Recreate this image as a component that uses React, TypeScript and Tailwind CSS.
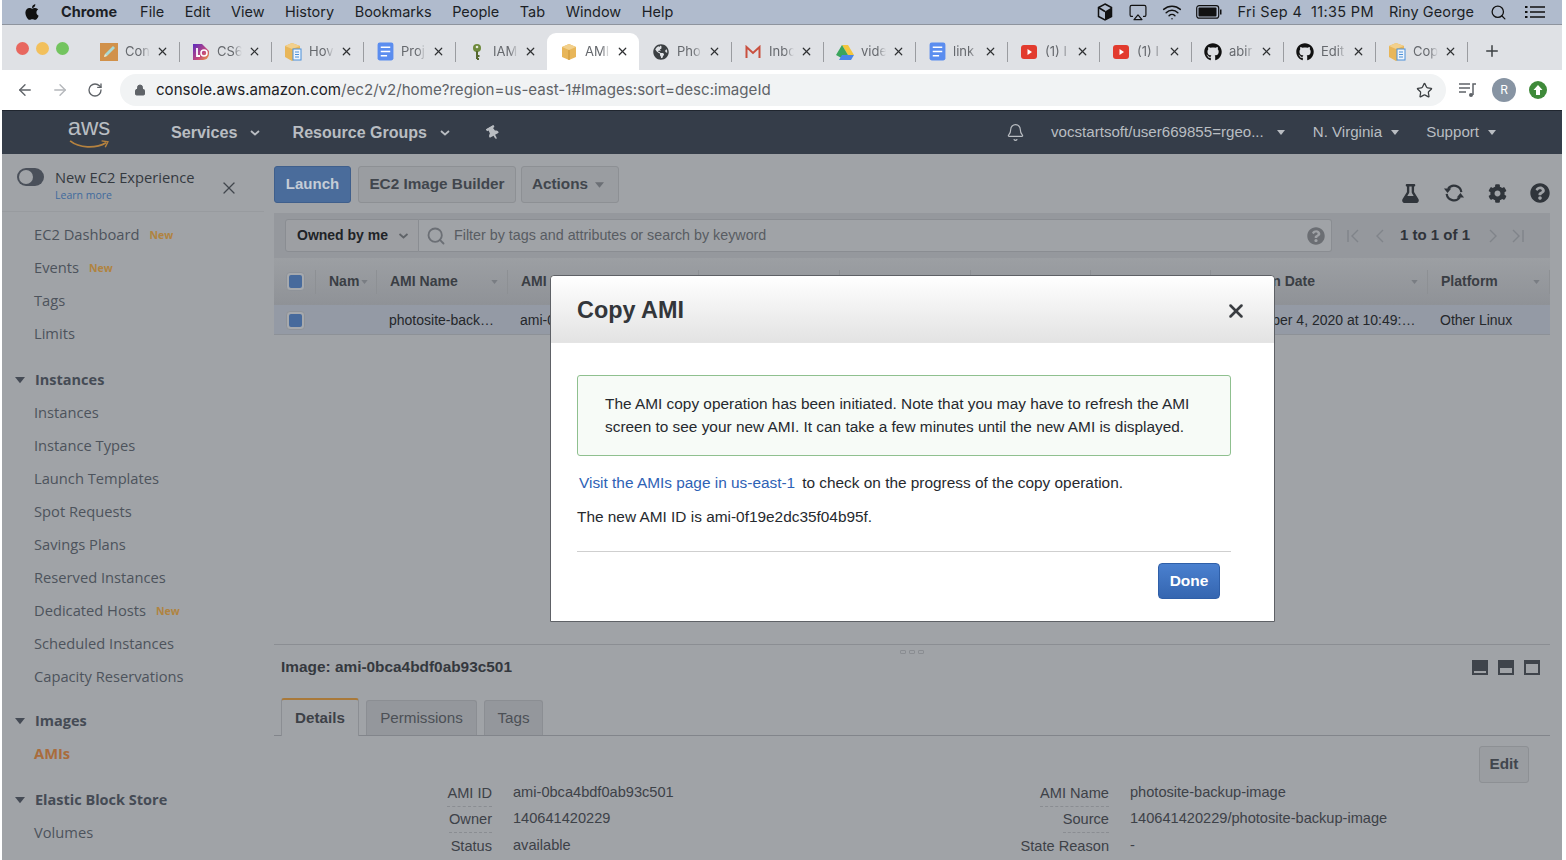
import type { ReactNode } from 'react'
import {
  FaApple,
  FaCog,
  FaFlask,
  FaGithub,
  FaGlobeAmericas,
  FaQuestionCircle,
  FaThumbtack,
} from 'react-icons/fa'
import { Airplay, ArrowLeft, ArrowRight, Bell, Lock, Plus, RotateCw, Search, Star, Wifi, X } from 'lucide-react'

function Box() {
  return (
    <svg viewBox="0 0 16 18" className="h-[18px] w-[16px]">
      <path d="M8 1l7 3v10l-7 3-7-3V4z" fill="#e8b659" />
      <path d="M8 1l7 3-7 3-7-3z" fill="#f2d08c" />
      <path d="M8 7v10" stroke="#c99436" strokeWidth="1" />
    </svg>
  )
}

function BoxDoc() {
  return (
    <svg viewBox="0 0 18 20" className="h-[20px] w-[18px]">
      <path d="M8 1l8 3v11l-8 4-7-4V4z" fill="#e8b659" />
      <path d="M8 1l8 3-8 3-7-3z" fill="#f2d08c" />
      <rect x="9" y="7" width="8" height="11" fill="#eef4fb" stroke="#4a90d9" />
      <path d="M11 10h4M11 12.500h4M11 15h4" stroke="#4a90d9" />
    </svg>
  )
}

function Doc() {
  return (
    <svg viewBox="0 0 16 18" className="h-[19px] w-[17px]">
      <rect x="0.500" y="0.500" width="15" height="17" rx="2" fill="#5b8def" />
      <path d="M3.500 5h9M3.500 9h9M3.500 13h6" stroke="#fff" strokeWidth="1.600" />
    </svg>
  )
}

function Pencil() {
  return (
    <svg viewBox="0 0 18 18" className="h-[18px] w-[18px]">
      <rect width="18" height="18" fill="#d1914a" />
      <path d="M4 14l1-3 8-8 2 2-8 8z" fill="#a9d9d4" />
      <path d="M4 14l1-3 2 2z" fill="#f3e2c0" />
    </svg>
  )
}

function LgLogo() {
  return (
    <svg viewBox="0 0 18 18" className="h-[18px] w-[18px]">
      <defs>
        <linearGradient id="lgGrad" x1="0" y1="0" x2="1" y2="1">
          <stop offset="0" stopColor="#5b2bbf" />
          <stop offset="0.600" stopColor="#c2487e" />
          <stop offset="1" stopColor="#f0a13c" />
        </linearGradient>
      </defs>
      <path d="M1 1h9l7 7v3a6 6 0 0 1-6 6H1z" fill="url(#lgGrad)" />
      <path d="M5 5v8h3" stroke="#fff" strokeWidth="1.800" fill="none" />
      <circle cx="12" cy="10" r="3" stroke="#fff" strokeWidth="1.500" fill="none" />
    </svg>
  )
}

function KeyIcon() {
  return (
    <svg viewBox="0 0 12 18" className="h-[18px] w-[12px]">
      <circle cx="6" cy="5" r="4" fill="#6e8a3c" />
      <circle cx="6" cy="4" r="1.300" fill="#e8eadf" />
      <path d="M6 8v8M6 13h2.500M6 16h2" stroke="#55682f" strokeWidth="2" />
    </svg>
  )
}

function Gmail() {
  return (
    <svg viewBox="0 0 16 14" className="h-[14px] w-[16px]">
      <path d="M1.500 13V2l6.500 6 6.500-6v11" fill="none" stroke="#c9503f" strokeWidth="2" />
    </svg>
  )
}

function Drive() {
  return (
    <svg viewBox="0 0 18 16" className="h-[16px] w-[18px]">
      <path d="M6 1h6l6 10h-6z" fill="#f4c63d" />
      <path d="M6 1l6 10-3 5-9-5z" fill="#3ba55d" />
      <path d="M3 16l3-5h12l-3 5z" fill="#4a86e8" />
    </svg>
  )
}

function YouTube() {
  return (
    <svg viewBox="0 0 16 16" className="h-[16px] w-[16px]">
      <rect width="16" height="14" y="1" rx="3" fill="#e23b2e" />
      <path d="M6.500 5l4.500 3-4.500 3z" fill="#fff" />
    </svg>
  )
}

const tabs: { label: string; icon: ReactNode; active?: boolean }[] = [
  { label: 'Con', icon: <Pencil /> },
  { label: 'CS6', icon: <LgLogo /> },
  { label: 'Hov', icon: <BoxDoc /> },
  { label: 'Proj', icon: <Doc /> },
  { label: 'IAM', icon: <KeyIcon /> },
  { label: 'AMI', icon: <Box />, active: true },
  { label: 'Pho', icon: <FaGlobeAmericas className="text-[16px] text-[#3c4043]" /> },
  { label: 'Inbo', icon: <Gmail /> },
  { label: 'vide', icon: <Drive /> },
  { label: 'link', icon: <Doc /> },
  { label: '(1) I', icon: <YouTube /> },
  { label: '(1) I', icon: <YouTube /> },
  { label: 'abir', icon: <FaGithub className="text-[18px] text-[#111]" /> },
  { label: 'Edit', icon: <FaGithub className="text-[18px] text-[#111]" /> },
  { label: 'Cop', icon: <BoxDoc /> },
]

function MenuBar() {
  const items = ['File', 'Edit', 'View', 'History', 'Bookmarks', 'People', 'Tab', 'Window', 'Help']
  return (
    <div className="flex h-[24px] items-center bg-[#b0bbcd] font-['Inter',sans-serif] text-[14.500px] text-[#1c1f26]">
      <FaApple className="ml-[21px] text-[18px] text-[#111]" />
      <span className="ml-[20px] font-bold">Chrome</span>
      <div className="ml-[23px] flex gap-[20.500px]">
        {items.map((item) => (
          <span key={item}>{item}</span>
        ))}
      </div>
      <div className="ml-auto flex items-center">
        <svg viewBox="0 0 16 18" className="h-[18px] w-[16px]">
          <path d="M8 1l6.500 3.500v9L8 17l-6.500-3.500v-9z" fill="none" stroke="#111" strokeWidth="1.500" />
          <path d="M8 8.500l6.500-4v9L8 17z" fill="#111" />
          <path d="M8 8.500l-6.500-4" stroke="#111" strokeWidth="1.500" />
        </svg>
        <Airplay className="ml-[15px] h-[19px] w-[20px] text-[#111]" strokeWidth={1.500} />
        <Wifi className="ml-[13px] h-[20px] w-[22px] text-[#111]" strokeWidth={1.800} />
        <svg viewBox="0 0 26 14" className="ml-[13px] h-[14px] w-[26px]">
          <rect x="0.700" y="0.700" width="22" height="12.500" rx="2.500" fill="none" stroke="#111" strokeWidth="1.200" />
          <rect x="2.500" y="2.500" width="18" height="9" rx="1" fill="#111" />
          <rect x="24" y="4.500" width="1.500" height="5" fill="#111" />
        </svg>
        <span className="ml-[15px] whitespace-pre tracking-[0.350px]">Fri Sep 4  11:35 PM</span>
        <span className="ml-[15px] tracking-[0.100px]">Riny George</span>
        <Search className="ml-[16px] h-[17px] w-[17px] text-[#111]" strokeWidth={1.800} />
        <svg viewBox="0 0 20 14" className="ml-[18px] mr-[17px] h-[14px] w-[20px]">
          <path d="M5 2h15M5 7h15M5 12h15" stroke="#111" strokeWidth="1.500" />
          <path d="M0 2h2.500M0 7h2.500M0 12h2.500" stroke="#111" strokeWidth="1.800" />
        </svg>
      </div>
    </div>
  )
}

function TabStrip() {
  return (
    <div className="flex h-[46px] items-end border-t border-t-[#8e949e] bg-[#dfe1e5] font-['Inter',sans-serif] text-[13px] text-[#66696e]">
      <div className="mb-[15px] ml-[14px] flex w-[71px] gap-[7px] self-end">
        <span className="h-[13px] w-[13px] rounded-full bg-[#e8675f]" />
        <span className="h-[13px] w-[13px] rounded-full bg-[#f2c05c]" />
        <span className="h-[13px] w-[13px] rounded-full bg-[#73c45f]" />
      </div>
      {tabs.map((tab, i) => (
        <div
          key={i}
          className={
            tab.active
              ? 'flex h-[37px] w-[92px] items-center rounded-t-[9px] bg-white pl-[13px]'
              : 'flex h-[37px] w-[92px] items-center pl-[13px]'
          }
        >
          <span className="flex w-[18px] shrink-0 justify-center">{tab.icon}</span>
          <span className="ml-[7px] w-[25px] shrink-0 overflow-hidden whitespace-nowrap [mask-image:linear-gradient(to_right,black_65%,transparent)]">
            {tab.label}
          </span>
          <X className="ml-[6px] h-[13px] w-[13px] shrink-0 text-[#2f3133]" strokeWidth={2.200} />
          {!tab.active && tabs[i + 1]?.active !== true && (
            <span className="ml-[10px] h-[20px] w-px shrink-0 bg-[#9a9ca0]" />
          )}
        </div>
      ))}
      <Plus className="mb-[10px] ml-[16px] h-[18px] w-[18px] text-[#3c4043]" strokeWidth={2} />
    </div>
  )
}

function AddressBar() {
  return (
    <div className="flex h-[40px] items-center bg-white font-['Inter',sans-serif]">
      <ArrowLeft className="ml-[14px] h-[18px] w-[18px] text-[#5f6368]" strokeWidth={1.800} />
      <ArrowRight className="ml-[17px] h-[18px] w-[18px] text-[#b4b7bb]" strokeWidth={1.800} />
      <RotateCw className="ml-[18px] h-[16px] w-[16px] text-[#5f6368]" strokeWidth={2} />
      <div className="ml-[17px] flex h-[32px] w-[1326px] items-center rounded-full bg-[#f1f3f4] pl-[14px] text-[15.100px]">
        <Lock className="h-[12px] w-[12px] fill-[#5f6368] text-[#5f6368]" />
        <span className="ml-[10px] text-[#202124]">console.aws.amazon.com</span>
        <span className="text-[#5f6368]">/ec2/v2/home?region=us-east-1#Images:sort=desc:imageId</span>
        <Star className="ml-auto mr-[13px] h-[17px] w-[17px] text-[#3c4043]" strokeWidth={1.800} />
      </div>
      <svg viewBox="0 0 18 16" className="ml-[13px] h-[16px] w-[18px]">
        <path d="M0 2h11M0 6h11M0 10h7" stroke="#5f6368" strokeWidth="1.500" />
        <circle cx="12" cy="13" r="2" fill="#5f6368" />
        <path d="M14 13V2h3" stroke="#5f6368" strokeWidth="1.500" fill="none" />
      </svg>
      <span className="ml-[15px] flex h-[24px] w-[24px] items-center justify-center rounded-full bg-[#8794a3] text-[12px] text-white">
        R
      </span>
      <span className="ml-[13px] flex h-[18px] w-[18px] items-center justify-center rounded-full bg-[#3f8a3a]">
        <svg viewBox="0 0 10 10" className="h-[10px] w-[10px]">
          <path d="M5 0l4.500 5H7v5H3V5H.500z" fill="#fff" />
        </svg>
      </span>
    </div>
  )
}

function NavCaret({ className }: { className: string }) {
  return (
    <svg viewBox="0 0 10 6" className={className}>
      <path d="M1 1l4 3.500L9 1" fill="none" stroke="currentColor" strokeWidth="1.800" />
    </svg>
  )
}

function Tri({ className }: { className: string }) {
  return (
    <svg viewBox="0 0 8 5" className={className}>
      <path d="M0 0h8L4 5z" fill="currentColor" />
    </svg>
  )
}

function AwsNav() {
  return (
    <div className="flex h-[44px] items-center border-t border-t-[#20262f] bg-[#353d49] text-[#b9bdc2]">
      <div className="relative ml-[64px] h-[36px] w-[46px]">
        <span className="block text-center text-[24px] leading-[24px]">aws</span>
        <svg viewBox="0 0 44 10" className="absolute bottom-[2px] left-[1px] h-[9px] w-[44px]">
          <path d="M1 1c10 8 28 9 40 2" fill="none" stroke="#b5823f" strokeWidth="2" />
          <path d="M36 1l7 1-3 6" fill="none" stroke="#b5823f" strokeWidth="1.600" />
        </svg>
      </div>
      <span className="ml-[59px] text-[16.200px] font-bold">Services</span>
      <NavCaret className="ml-[12px] h-[6px] w-[10px]" />
      <span className="ml-[33px] text-[16px] font-bold">Resource Groups</span>
      <NavCaret className="ml-[13px] h-[6px] w-[10px]" />
      <FaThumbtack className="ml-[36px] -rotate-30 text-[14px]" />
      <Bell className="ml-auto h-[19px] w-[19px]" strokeWidth={1.500} />
      <span className="ml-[26px] text-[15.100px]">vocstartsoft/user669855=rgeo...</span>
      <Tri className="ml-[13px] h-[5px] w-[8px]" />
      <span className="ml-[28px] text-[15.100px]">N. Virginia</span>
      <Tri className="ml-[9px] h-[5px] w-[8px]" />
      <span className="ml-[27px] text-[15.100px]">Support</span>
      <Tri className="ml-[9px] mr-[66px] h-[5px] w-[8px]" />
    </div>
  )
}

function NewTag() {
  return <span className="ml-[10px] mt-[2px] text-[10.500px] font-bold text-[#b08340]">New</span>
}

function NavRow({ label, isNew, active }: { label: string; isNew?: boolean; active?: boolean }) {
  return (
    <div className="flex h-[33px] items-center pl-[32px]">
      <span className={active ? 'font-bold text-[#a96c3c]' : ''}>{label}</span>
      {isNew && <NewTag />}
    </div>
  )
}

function NavHeader({ label, className }: { label: string; className: string }) {
  return (
    <div className={`flex h-[33px] items-center pl-[13px] font-bold text-[#454b55] ${className}`}>
      <Tri className="h-[8px] w-[10px]" />
      <span className="ml-[10px] text-[14.500px]">{label}</span>
    </div>
  )
}

function Sidebar() {
  return (
    <div className="w-[272px] shrink-0 font-['Open_Sans',sans-serif] text-[14.700px] text-[#4d535c]">
      <div className="mr-[10px] flex h-[58px] border-b border-b-[#989b9f] pl-[15px] pt-[11px]">
        <span className="mt-[3px] flex h-[18px] w-[27px] items-center rounded-full bg-[#4a505a] pl-[2px]">
          <span className="h-[14px] w-[14px] rounded-full bg-[#a0a3a7]" />
        </span>
        <div className="ml-[11px]">
          <div className="text-[14.700px] leading-[24px] text-[#34393f]">New EC2 Experience</div>
          <div className="text-[10.500px] leading-[13px] text-[#3f6a9d]">Learn more</div>
        </div>
        <X className="ml-[25px] mt-[13px] h-[20px] w-[20px] text-[#41464d]" strokeWidth={1.500} />
      </div>
      <div className="pt-[6px]">
        <NavRow label="EC2 Dashboard" isNew />
        <NavRow label="Events" isNew />
        <NavRow label="Tags" />
        <NavRow label="Limits" />
        <NavHeader label="Instances" className="mt-[13px]" />
        <NavRow label="Instances" />
        <NavRow label="Instance Types" />
        <NavRow label="Launch Templates" />
        <NavRow label="Spot Requests" />
        <NavRow label="Savings Plans" />
        <NavRow label="Reserved Instances" />
        <NavRow label="Dedicated Hosts" isNew />
        <NavRow label="Scheduled Instances" />
        <NavRow label="Capacity Reservations" />
        <NavHeader label="Images" className="mt-[11px]" />
        <NavRow label="AMIs" active />
        <NavHeader label="Elastic Block Store" className="mt-[13px]" />
        <NavRow label="Volumes" />
      </div>
    </div>
  )
}

function GreyButton({ children, className }: { children: ReactNode; className: string }) {
  return (
    <button
      type="button"
      className={`flex h-[37px] items-center justify-center rounded-[3px] border border-[#8d9094] bg-[#9a9da1] text-[15.300px] font-bold text-[#41464d] ${className}`}
    >
      {children}
    </button>
  )
}

function Checkbox() {
  return (
    <span className="flex h-[19px] w-[19px] items-center justify-center rounded-[4px] border border-[#8f9399] bg-[#a6a9ad]">
      <span className="h-[13px] w-[13px] rounded-[2px] bg-[#476a9c]" />
    </span>
  )
}

function Toolbar() {
  return (
    <div className="flex h-[59px] items-start pt-[12px]">
      <button
        type="button"
        className="h-[37px] w-[77px] rounded-[3px] border border-[#3f5f8c] bg-[#4a6c9b] text-[15px] font-bold text-[#c5ccd6]"
      >
        Launch
      </button>
      <GreyButton className="ml-[7px] w-[158px]">EC2 Image Builder</GreyButton>
      <GreyButton className="ml-[5px] w-[98px] gap-[7px] pr-[4px]">
        Actions <Tri className="h-[6px] w-[9px] text-[#6b6f75]" />
      </GreyButton>
      <div className="ml-auto flex items-center gap-[23px] pt-[16px] text-[#30353b]">
        <FaFlask className="text-[19px]" />
        <svg viewBox="0 0 24 24" className="h-[22px] w-[22px]">
          <path
            d="M20 11a8 8 0 0 0-14.500-3.500M4 13a8 8 0 0 0 14.500 3.500"
            fill="none"
            stroke="currentColor"
            strokeWidth="2.400"
          />
          <path d="M1 7h8l-4 5zM23 17h-8l4-5z" fill="currentColor" />
        </svg>
        <FaCog className="text-[19px]" />
        <FaQuestionCircle className="text-[20px]" />
      </div>
    </div>
  )
}

function FilterBar() {
  return (
    <div className="flex h-[45px] items-center bg-[#95989d] pl-[11px] text-[14px]">
      <div className="flex h-[33px] w-[134px] items-center rounded-l-[3px] border border-[#8a8d92] bg-[#9d9fa3] pl-[11px] font-bold text-[#202327]">
        Owned by me
        <NavCaret className="ml-[10px] h-[6px] w-[11px] text-[#5f6368]" />
      </div>
      <div className="flex h-[33px] w-[913px] items-center rounded-r-[3px] border border-l-0 border-[#8a8d92] bg-[#a0a3a7] pl-[7px] text-[14.300px] text-[#585c62]">
        <Search className="h-[20px] w-[20px] text-[#6b6f75]" strokeWidth={2.200} />
        <span className="ml-[8px]">Filter by tags and attributes or search by keyword</span>
        <FaQuestionCircle className="ml-auto mr-[6px] text-[18px] text-[#6b6e73]" />
      </div>
      <svg viewBox="0 0 14 14" className="ml-[14px] h-[14px] w-[14px] text-[#80848a]">
        <path d="M2 1v12M12 1L6 7l6 6" fill="none" stroke="currentColor" strokeWidth="1.400" />
      </svg>
      <svg viewBox="0 0 14 14" className="ml-[13px] h-[14px] w-[14px] text-[#80848a]">
        <path d="M10 1L4 7l6 6" fill="none" stroke="currentColor" strokeWidth="1.400" />
      </svg>
      <span className="ml-[13px] text-[15px] font-bold text-[#30343a]">1 to 1 of 1</span>
      <svg viewBox="0 0 14 14" className="ml-[16px] h-[14px] w-[14px] text-[#80848a]">
        <path d="M4 1l6 6-6 6" fill="none" stroke="currentColor" strokeWidth="1.400" />
      </svg>
      <svg viewBox="0 0 14 14" className="ml-[11px] h-[14px] w-[14px] text-[#80848a]">
        <path d="M2 1l6 6-6 6M12 1v12" fill="none" stroke="currentColor" strokeWidth="1.400" />
      </svg>
    </div>
  )
}

const columnWidths = [42, 61, 131, 191, 141, 131, 120, 120, 217, 122]

function HeadCell({ width, label, caret = true }: { width: number; label?: string; caret?: boolean }) {
  return (
    <div
      className="flex h-[24px] shrink-0 items-center justify-between border-r border-r-[#8d9094] pl-[13px] pr-[9px]"
      style={{ width }}
    >
      <span className="overflow-hidden whitespace-nowrap">{label}</span>
      {caret && <Tri className="h-[4px] w-[7px] shrink-0 text-[#797d83]" />}
    </div>
  )
}

function AmiTable() {
  return (
    <div className="text-[14px]">
      <div className="flex h-[47px] items-center bg-gradient-to-b from-[#9c9fa3] to-[#8f9297] font-bold text-[#3a3e44]">
        <div
          className="flex h-[24px] shrink-0 items-center border-r border-r-[#8d9094] pl-[12px]"
          style={{ width: columnWidths[0] }}
        >
          <Checkbox />
        </div>
        <div
          className="flex h-[24px] shrink-0 items-center border-r border-r-[#8d9094] pl-[13px]"
          style={{ width: columnWidths[1] }}
        >
          Nam
          <Tri className="ml-[2px] h-[4px] w-[7px] text-[#797d83]" />
        </div>
        <HeadCell width={columnWidths[2]} label="AMI Name" />
        <HeadCell width={columnWidths[3]} label="AMI ID" />
        <HeadCell width={columnWidths[4]} caret={false} />
        <HeadCell width={columnWidths[5]} caret={false} />
        <HeadCell width={columnWidths[6]} caret={false} />
        <HeadCell width={columnWidths[7]} caret={false} />
        <HeadCell width={columnWidths[8]} label="Creation Date" />
        <HeadCell width={columnWidths[9]} label="Platform" />
      </div>
      <div className="flex h-[30px] items-center border-b border-b-[#8d9197] bg-[#949aa5] pt-[1px] text-[#24272b]">
        <div className="shrink-0 pl-[12px]" style={{ width: columnWidths[0] + columnWidths[1] }}>
          <Checkbox />
        </div>
        <div className="shrink-0 pl-[12px]" style={{ width: columnWidths[2] }}>
          photosite-back…
        </div>
        <div className="shrink-0 pl-[12px]" style={{ width: 703 }}>
          ami-0bca4bdf0ab93c501
        </div>
        <div className="shrink-0 whitespace-nowrap pl-[13px]" style={{ width: columnWidths[8] }}>
          September 4, 2020 at 10:49:…
        </div>
        <div className="shrink-0 pl-[12px]">Other Linux</div>
      </div>
    </div>
  )
}

function DetailRow({ label, value, width }: { label: string; value: string; width: number }) {
  return (
    <div className="flex h-[26.300px] items-start">
      <div className="flex shrink-0 justify-end" style={{ width }}>
        <span className="border-b border-dashed border-b-[#8a8d92] pb-[1px]">{label}</span>
      </div>
      <span className="ml-[21px] -mt-[1px] whitespace-nowrap">{value}</span>
    </div>
  )
}

function DetailsPanel() {
  return (
    <div className="h-[216px] border-t border-t-[#8b8e93] text-[14.600px] text-[#3d4147]">
      <div className="relative flex h-[44px] items-center justify-between pl-[7px] pr-[10px]">
        <span className="text-[15.400px] font-bold text-[#34383e]">Image: ami-0bca4bdf0ab93c501</span>
        <span className="absolute left-[626px] top-[5px] flex gap-[3px]">
          <span className="h-[4px] w-[6px] rounded-[1px] border border-[#8a8d92]" />
          <span className="h-[4px] w-[6px] rounded-[1px] border border-[#8a8d92]" />
          <span className="h-[4px] w-[6px] rounded-[1px] border border-[#8a8d92]" />
        </span>
        <div className="flex gap-[10px]">
          <span className="flex h-[15px] w-[16px] items-end bg-[#3f444b] p-[2px]">
            <span className="h-[2px] w-full bg-[#a0a3a7]" />
          </span>
          <span className="flex h-[15px] w-[16px] items-end bg-[#3f444b] p-[2px]">
            <span className="h-[5px] w-full bg-[#a0a3a7]" />
          </span>
          <span className="flex h-[15px] w-[16px] items-end bg-[#3f444b] p-[2px] pt-[4px]">
            <span className="h-full w-full bg-[#a0a3a7]" />
          </span>
        </div>
      </div>
      <div className="flex h-[47px] items-end border-b border-b-[#82858b] pl-[7px] pt-[9px] text-[15.200px]">
        <div className="-mb-px flex h-[38px] w-[78px] items-center justify-center rounded-t-[3px] border border-b-0 border-[#8b8e93] border-t-2 border-t-[#a9793a] bg-[#a0a3a7] font-bold">
          Details
        </div>
        <div className="ml-[7px] flex h-[35px] w-[111px] items-center justify-center rounded-t-[3px] border border-b-0 border-[#8b8e93] bg-[#94979c] text-[#4c5056]">
          Permissions
        </div>
        <div className="ml-[7px] flex h-[35px] w-[59px] items-center justify-center rounded-t-[3px] border border-b-0 border-[#8b8e93] bg-[#94979c] text-[#4c5056]">
          Tags
        </div>
      </div>
      <div className="h-[115px] overflow-hidden pr-[21px] pt-[10px]">
        <div className="flex justify-end">
          <GreyButton className="w-[50px] text-[14.500px]">Edit</GreyButton>
        </div>
        <div className="flex">
          <div className="w-[239px] shrink-0">
            <DetailRow width={218} label="AMI ID" value="ami-0bca4bdf0ab93c501" />
            <DetailRow width={218} label="Owner" value="140641420229" />
            <DetailRow width={218} label="Status" value="available" />
          </div>
          <div className="ml-[378px]">
            <DetailRow width={218} label="AMI Name" value="photosite-backup-image" />
            <DetailRow width={218} label="Source" value="140641420229/photosite-backup-image" />
            <DetailRow width={218} label="State Reason" value="-" />
          </div>
        </div>
      </div>
    </div>
  )
}

function CopyAmiModal() {
  return (
    <div className="absolute left-[548px] top-[121px] h-[347px] w-[725px] rounded-t-[4px] border border-[#5e6166] bg-white text-[15.400px] text-[#26292e]">
      <div className="flex h-[67px] items-center justify-between rounded-t-[4px] border-b border-b-[#e4e4e4] bg-gradient-to-b from-white to-[#e3e3e3] pl-[26px] pr-[27px] pt-[4px]">
        <span className="text-[23.400px] font-bold text-[#33363a]">Copy AMI</span>
        <X className="h-[22px] w-[22px] text-[#3a3d41]" strokeWidth={2.800} />
      </div>
      <div className="pl-[26px] pr-[43px] pt-[32px]">
        <div className="flex h-[81px] flex-col justify-center whitespace-nowrap rounded-[3px] border border-[#8fc08f] bg-[#f7fbf7] pb-[2px] pl-[27px] leading-[23px]">
          <div>The AMI copy operation has been initiated. Note that you may have to refresh the AMI</div>
          <div>screen to see your new AMI. It can take a few minutes until the new AMI is displayed.</div>
        </div>
        <div className="mt-[17px] whitespace-nowrap pl-[2px] leading-[20px]">
          <span className="text-[#2e62b5]">Visit the AMIs page in us-east-1</span>
          <span className="ml-[7px]">to check on the progress of the copy operation.</span>
        </div>
        <div className="mt-[14px] leading-[20px]">The new AMI ID is ami-0f19e2dc35f04b95f.</div>
        <div className="mt-[24px] flex justify-end border-t border-t-[#cfcfcf] pr-[11px] pt-[11px]">
          <button
            type="button"
            className="h-[36px] w-[62px] rounded-[4px] border border-[#2f5fa8] bg-gradient-to-b from-[#4a80cf] to-[#3566b0] text-[15.500px] font-bold text-white"
          >
            Done
          </button>
        </div>
      </div>
    </div>
  )
}

export default function App() {
  return (
    <div className="h-[860px] w-[1566px] overflow-hidden bg-white font-['Liberation_Sans',Arial,sans-serif]">
      <div className="ml-[2px] h-full w-[1560px]">
        <MenuBar />
        <TabStrip />
        <AddressBar />
        <AwsNav />
        <div className="relative flex h-[706px] bg-[#a0a3a7]">
          <Sidebar />
          <div className="flex w-[1276px] flex-col">
            <Toolbar />
            <FilterBar />
            <AmiTable />
            <div className="flex-1" />
            <DetailsPanel />
          </div>
          <CopyAmiModal />
        </div>
      </div>
    </div>
  )
}
